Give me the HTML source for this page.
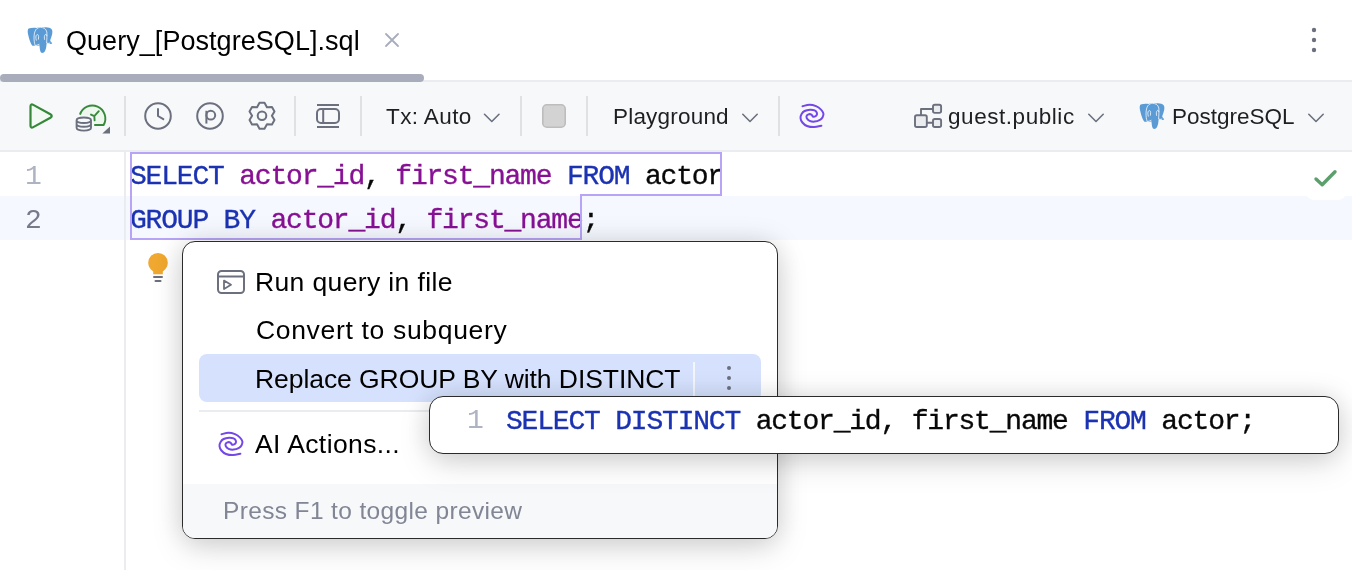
<!DOCTYPE html>
<html><head><meta charset="utf-8">
<style>
*{margin:0;padding:0;box-sizing:border-box}
html,body{width:1352px;height:570px;overflow:hidden;background:#fff}
body{position:relative;font-family:"Liberation Sans",sans-serif;color:#1e1f22}
.abs{position:absolute}
.t{position:absolute;white-space:pre;line-height:1;will-change:transform}
.mono{font-family:"Liberation Mono",monospace;font-size:28px!important;letter-spacing:-1.2px;-webkit-text-stroke:.35px currentColor}
svg{position:absolute;overflow:visible}
.ic{fill:none;stroke:#6c707e;stroke-width:2;stroke-linecap:round;stroke-linejoin:round}
.kw{color:#1b32b2}.col{color:#871094}
</style></head><body>

<!-- tab bar -->
<div class="abs" style="left:0;top:80px;width:1352px;height:2px;background:#ebecf0"></div>
<div class="abs" style="left:0;top:74px;width:424px;height:8px;border-radius:4px;background:#a9adbb"></div>

<svg style="left:27px;top:27px" width="26" height="26" viewBox="0 0 26 26">
 <path d="M1.6 1.6C4 .6 7 .4 9.5 .9C11 .3 12.5 0 13.6 0C15 0 16.2.2 17.2.4C20 0 23.6.6 25 2.8C25.9 4.6 25.2 8.6 23.2 13.2C23.6 14.6 24.4 15.6 25.2 15.9C24.7 17.2 23.4 17.2 22.2 16.6L19.6 16.2C19.4 20 18.8 24.6 16.2 25.8C14.2 26.4 13.2 25 12.9 22.2L12.4 18.2C11.2 18.8 9.6 18.8 8.2 18.6C7.2 18.9 6.2 18.9 5.4 18.7C4 17.6 2 12 .9 6.6C.5 4.4.7 2.4 1.6 1.6Z" fill="#5a9bd6"/>
<path d="M8.2 18.4C6.5 14 6.6 6 8.8 2.8C10.2.9 12 .4 13.6.4C16.5.4 19.2 1.8 19.8 5C20.2 8 19.8 12 19.6 16M8.4 18.6C10.2 18.2 11.4 17.6 12.4 17.2M19.7 16C21 16.5 22.4 16.4 23.2 15.8M9.4 13.6C8.6 11 8.6 8.6 9.8 7.8C10.8 7.3 11.6 8 11.6 9.4L11.4 12.6M17.6 12.8C17.2 10.5 17.2 8.4 18.3 7.6C19.1 7.1 19.8 7.8 19.8 9" fill="none" stroke="#fff" stroke-width=".75"/>
</svg>
<div class="t" style="left:66px;top:28px;font-size:27px;color:#000;letter-spacing:.05px">Query_[PostgreSQL].sql</div>
<svg style="left:385px;top:33px" width="14" height="14" viewBox="0 0 14 14"><path d="M1 1L13 13M13 1L1 13" stroke="#a8adbd" stroke-width="1.8" stroke-linecap="round"/></svg>
<svg style="left:1310px;top:26px" width="8" height="28" viewBox="0 0 8 28"><circle cx="4" cy="4" r="2.2" fill="#6c707e"/><circle cx="4" cy="14" r="2.2" fill="#6c707e"/><circle cx="4" cy="24" r="2.2" fill="#6c707e"/></svg>

<!-- toolbar -->
<div class="abs" style="left:0;top:82px;width:1352px;height:68px;background:#f7f8fa"></div>
<div class="abs" style="left:0;top:150px;width:1352px;height:2px;background:#ebecf0"></div>

<svg style="left:0;top:0" width="1352" height="152">
 <!-- run -->
 <path d="M30.5 106.6Q30.5 103.4 33.3 104.9L50.4 114.3Q53.1 116 50.4 117.7L33.3 127.1Q30.5 128.6 30.5 125.4Z" fill="#f3faf3" stroke="#358838" stroke-width="2.2" stroke-linejoin="round"/>
 <!-- gauge db -->
 <g transform="translate(72 100)">
  <path d="M7.94 14.6A13 13 0 1 1 31.6 25H22.2V16.5Z" fill="#eef7ee"/>
  <path d="M7.94 14.6A13 13 0 1 1 31.6 25H22.2" fill="none" stroke="#378a3c" stroke-width="1.9"/>
  <path d="M22.3 16.2L26.8 11.2M19 14.6L22.3 16.2L22.6 20.4" fill="none" stroke="#378a3c" stroke-width="1.9" stroke-linecap="round"/>
  <path d="M3.6 20.2C3.6 15 20 15 20 20V27.5C20 32.8 3.6 32.8 3.6 27.5Z" fill="#f7f8fa"/>
  <path d="M4.6 20.2C4.6 16.5 19 16.5 19 20.2S4.6 23.9 4.6 20.2ZM4.6 20.2V27.8C4.6 31.5 19 31.5 19 27.8V20.2M4.6 24C4.6 27.7 19 27.7 19 24" fill="none" stroke="#6c707e" stroke-width="1.9"/>
  <path d="M30.3 33.6L38 26.4V33.6Z" fill="#6c707e"/>
 </g>
 <rect x="124" y="96" width="2" height="40" fill="#dfe1e5"/>
 <!-- clock -->
 <circle cx="158" cy="116" r="12.8" class="ic"/>
 <path d="M158 109V116L163.3 119.2" class="ic"/>
 <!-- p -->
 <circle cx="210" cy="116" r="12.8" class="ic"/>
 <path d="M206.4 110.8V123.6" class="ic" style="stroke-linecap:butt"/>
 <circle cx="210.8" cy="115.2" r="4.4" class="ic"/>
 <!-- gear -->
 <g transform="translate(249 102.75)"><path d="M10.50 0.04L15.50 0.04L17.95 4.43L22.98 4.36L25.47 8.68L22.90 13.00L25.47 17.32L22.98 21.64L17.95 21.57L15.50 25.96L10.50 25.96L8.05 21.57L3.02 21.64L0.53 17.32L3.10 13.00L0.53 8.68L3.02 4.36L8.05 4.43Z" class="ic"/><circle cx="13" cy="13" r="4.3" class="ic"/></g>
 <rect x="294" y="96" width="2" height="40" fill="#dfe1e5"/>
 <!-- layout -->
 <path d="M317 105H339M317 127H339" class="ic" style="stroke-linecap:butt"/>
 <rect x="317" y="109" width="22" height="14" rx="4" class="ic"/>
 <path d="M323.2 109V123" class="ic"/>
 <rect x="360" y="96" width="2" height="40" fill="#dfe1e5"/>
 <path d="M484.5 114.3L491.8 121.5L499 114.3" class="ic" style="stroke-width:1.6"/>
 <rect x="520" y="96" width="2" height="40" fill="#dfe1e5"/>
 <rect x="542.8" y="104.8" width="22.4" height="22.4" rx="4" fill="#d3d3d3" stroke="#bdbdbd" stroke-width="1.6"/>
 <rect x="586" y="96" width="2" height="40" fill="#dfe1e5"/>
 <path d="M742.8 114.3L750 121.5L757.2 114.3" class="ic" style="stroke-width:1.6"/>
 <rect x="778" y="96" width="2" height="40" fill="#dfe1e5"/>
 <g transform="translate(795 99)" fill="none" stroke="#7347e8" stroke-width="2" stroke-linecap="round">
  <path d="M7.50 7.20C8.67 6.97 12.25 5.80 14.50 5.80C16.75 5.80 19.08 6.40 21.00 7.20C22.92 8.00 24.77 9.38 26.00 10.60C27.23 11.82 28.13 13.23 28.40 14.50C28.67 15.77 28.17 17.15 27.60 18.20C27.03 19.25 26.33 20.07 25.00 20.80C23.67 21.53 21.33 22.43 19.60 22.60C17.87 22.77 15.90 22.37 14.60 21.80C13.30 21.23 12.27 20.07 11.80 19.20C11.33 18.33 11.43 17.27 11.80 16.60C12.17 15.93 13.23 15.37 14.00 15.20C14.77 15.03 15.80 15.27 16.40 15.60C17.00 15.93 17.40 16.93 17.60 17.20"/>
  <path d="M26.40 26.70C25.18 26.93 21.50 28.05 19.10 28.10C16.70 28.15 13.95 27.77 12.00 27.00C10.05 26.23 8.48 24.82 7.40 23.50C6.32 22.18 5.63 20.52 5.50 19.10C5.37 17.68 5.92 16.18 6.60 15.00C7.28 13.82 8.18 12.72 9.60 12.00C11.02 11.28 13.43 10.80 15.10 10.70C16.77 10.60 18.48 10.92 19.60 11.40C20.72 11.88 21.47 12.80 21.80 13.60C22.13 14.40 21.97 15.53 21.60 16.20C21.23 16.87 20.23 17.37 19.60 17.60C18.97 17.83 18.10 17.60 17.80 17.60"/>
 </g>
 <!-- schema -->
 <g class="ic" style="stroke-width:1.9">
  <rect x="915" y="115.2" width="11.8" height="11.8" rx="1.8" style="fill:#ebecf0"/>
  <rect x="933" y="104.8" width="8.1" height="8.1" rx="1.8" style="fill:#ebecf0"/>
  <rect x="933" y="119" width="8.1" height="8" rx="1.8" style="fill:#ebecf0"/>
  <path d="M921 115.2V109H933M926.8 122.8H933" style="stroke-linecap:butt"/>
 </g>
 <path d="M1088.8 114.3L1096 121.5L1103.2 114.3" class="ic" style="stroke-width:1.6"/>
 <path d="M1308.8 114.3L1316 121.5L1323.2 114.3" class="ic" style="stroke-width:1.6"/>
</svg>
<div class="t" style="left:386px;top:106px;font-size:22.5px;letter-spacing:.4px">Tx: Auto</div>
<div class="t" style="left:613px;top:106px;font-size:22.5px;letter-spacing:.2px">Playground</div>
<div class="t" style="left:948px;top:106px;font-size:22.5px;letter-spacing:.55px">guest.public</div>
<svg style="left:1139px;top:103px" width="26" height="26" viewBox="0 0 26 26">
 <path d="M1.6 1.6C4 .6 7 .4 9.5 .9C11 .3 12.5 0 13.6 0C15 0 16.2.2 17.2.4C20 0 23.6.6 25 2.8C25.9 4.6 25.2 8.6 23.2 13.2C23.6 14.6 24.4 15.6 25.2 15.9C24.7 17.2 23.4 17.2 22.2 16.6L19.6 16.2C19.4 20 18.8 24.6 16.2 25.8C14.2 26.4 13.2 25 12.9 22.2L12.4 18.2C11.2 18.8 9.6 18.8 8.2 18.6C7.2 18.9 6.2 18.9 5.4 18.7C4 17.6 2 12 .9 6.6C.5 4.4.7 2.4 1.6 1.6Z" fill="#5a9bd6"/>
<path d="M8.2 18.4C6.5 14 6.6 6 8.8 2.8C10.2.9 12 .4 13.6.4C16.5.4 19.2 1.8 19.8 5C20.2 8 19.8 12 19.6 16M8.4 18.6C10.2 18.2 11.4 17.6 12.4 17.2M19.7 16C21 16.5 22.4 16.4 23.2 15.8M9.4 13.6C8.6 11 8.6 8.6 9.8 7.8C10.8 7.3 11.6 8 11.6 9.4L11.4 12.6M17.6 12.8C17.2 10.5 17.2 8.4 18.3 7.6C19.1 7.1 19.8 7.8 19.8 9" fill="none" stroke="#fff" stroke-width=".75"/>
</svg>
<div class="t" style="left:1172px;top:106px;font-size:22.5px">PostgreSQL</div>

<!-- editor -->
<div class="abs" style="left:0;top:196px;width:1352px;height:44px;background:#f5f8fe"></div>
<div class="abs" style="left:124px;top:152px;width:2px;height:418px;background:#ebecf0"></div>
<div class="abs" style="left:1305px;top:152px;width:42px;height:48px;background:#fff;border-radius:0 0 9px 9px"></div>
<svg style="left:0;top:0" width="1352" height="570"><path d="M1316 179L1322.2 184.8L1335 171.8" fill="none" stroke="#5b9f6b" stroke-width="3.4" stroke-linecap="round" stroke-linejoin="round"/></svg>

<div class="t mono" style="left:25px;top:163px;-webkit-text-stroke:0;font-size:26px;color:#aeb3c2">1</div>
<div class="t mono" style="left:25px;top:207px;-webkit-text-stroke:0;font-size:26px;color:#767a8a">2</div>

<div class="t mono" style="left:130px;top:163px;font-size:26px;color:#080808"><span class="kw">SELECT</span> <span class="col">actor_id</span>, <span class="col">first_name</span> <span class="kw">FROM</span> actor</div>
<div class="t mono" style="left:130px;top:207px;font-size:26px;color:#080808"><span class="kw">GROUP BY</span> <span class="col">actor_id</span>, <span class="col">first_name</span>;</div>

<svg style="left:0;top:0" width="1352" height="570"><path d="M131 153H721V195H581V239H131Z" fill="none" stroke="#b7a4f7" stroke-width="2"/></svg>

<!-- bulb -->
<svg style="left:0;top:0" width="1352" height="570">
 <path d="M153.2 274.2V271.5C150.4 269.5 148.2 266.5 148.2 262.8A9.8 9.8 0 0 1 167.8 262.8C167.8 266.5 165.6 269.5 162.8 271.5V274.2Z" fill="#f0a830"/>
 <path d="M154 277H162M155.5 281H160.5" stroke="#6c707e" stroke-width="2" stroke-linecap="round"/>
</svg>

<!-- popup -->
<div class="abs" style="left:182px;top:241px;width:596px;height:298px;border:1px solid #2b2b2b;border-radius:13px;background:#fff;box-shadow:0 0 28px rgba(0,0,0,.12),0 10px 32px rgba(0,0,0,.13);overflow:hidden">
  <div class="abs" style="left:16px;top:112px;width:562px;height:48px;border-radius:8px;background:#d5e1fd"></div>
  <div class="abs" style="left:510px;top:120px;width:2px;height:40px;background:#f4f6fd"></div>
  <div class="abs" style="left:16px;top:168px;width:562px;height:2px;background:#ebecf0"></div>
  <div class="abs" style="left:0;top:242px;width:596px;height:60px;background:#f7f8fa"></div>
</div>
<svg style="left:0;top:0" width="1352" height="570">
 <rect x="218" y="271" width="26" height="22" rx="3.5" class="ic"/>
 <path d="M218 276.6H244" class="ic"/>
 <path d="M224 280.6L231 284.8L224 289Z" class="ic" style="stroke-width:1.8"/>
 <circle cx="729" cy="368" r="2" fill="#6c707e"/><circle cx="729" cy="378" r="2" fill="#6c707e"/><circle cx="729" cy="388" r="2" fill="#6c707e"/>
 <g transform="translate(214 427)" fill="none" stroke="#7347e8" stroke-width="2" stroke-linecap="round">
  <path d="M7.50 7.20C8.67 6.97 12.25 5.80 14.50 5.80C16.75 5.80 19.08 6.40 21.00 7.20C22.92 8.00 24.77 9.38 26.00 10.60C27.23 11.82 28.13 13.23 28.40 14.50C28.67 15.77 28.17 17.15 27.60 18.20C27.03 19.25 26.33 20.07 25.00 20.80C23.67 21.53 21.33 22.43 19.60 22.60C17.87 22.77 15.90 22.37 14.60 21.80C13.30 21.23 12.27 20.07 11.80 19.20C11.33 18.33 11.43 17.27 11.80 16.60C12.17 15.93 13.23 15.37 14.00 15.20C14.77 15.03 15.80 15.27 16.40 15.60C17.00 15.93 17.40 16.93 17.60 17.20"/>
  <path d="M26.40 26.70C25.18 26.93 21.50 28.05 19.10 28.10C16.70 28.15 13.95 27.77 12.00 27.00C10.05 26.23 8.48 24.82 7.40 23.50C6.32 22.18 5.63 20.52 5.50 19.10C5.37 17.68 5.92 16.18 6.60 15.00C7.28 13.82 8.18 12.72 9.60 12.00C11.02 11.28 13.43 10.80 15.10 10.70C16.77 10.60 18.48 10.92 19.60 11.40C20.72 11.88 21.47 12.80 21.80 13.60C22.13 14.40 21.97 15.53 21.60 16.20C21.23 16.87 20.23 17.37 19.60 17.60C18.97 17.83 18.10 17.60 17.80 17.60"/>
 </g>
</svg>
<div class="t" style="left:255px;top:269px;font-size:26.5px;color:#000;letter-spacing:.37px">Run query in file</div>
<div class="t" style="left:255.5px;top:316.6px;font-size:26.5px;color:#000;letter-spacing:.67px">Convert to subquery</div>
<div class="t" style="left:254.7px;top:366.1px;font-size:26.5px;color:#000;letter-spacing:-.07px">Replace GROUP BY with DISTINCT</div>
<div class="t" style="left:255px;top:431.3px;font-size:26.5px;color:#000;letter-spacing:.4px">AI Actions...</div>
<div class="t" style="left:223px;top:499.3px;font-size:24.5px;color:#818594;letter-spacing:.36px">Press F1 to toggle preview</div>

<!-- preview popup -->
<div class="abs" style="left:429px;top:396px;width:910px;height:58px;border:1px solid #2b2b2b;border-radius:14px;background:#fff;box-shadow:0 0 28px rgba(0,0,0,.12),0 10px 32px rgba(0,0,0,.13)"></div>
<div class="t mono" style="left:467px;top:407px;-webkit-text-stroke:0;font-size:26px;color:#aeb3c2">1</div>
<div class="t mono" style="left:506px;top:408px;font-size:26px;color:#080808"><span class="kw">SELECT DISTINCT</span> actor_id, first_name <span class="kw">FROM</span> actor;</div>

</body></html>
